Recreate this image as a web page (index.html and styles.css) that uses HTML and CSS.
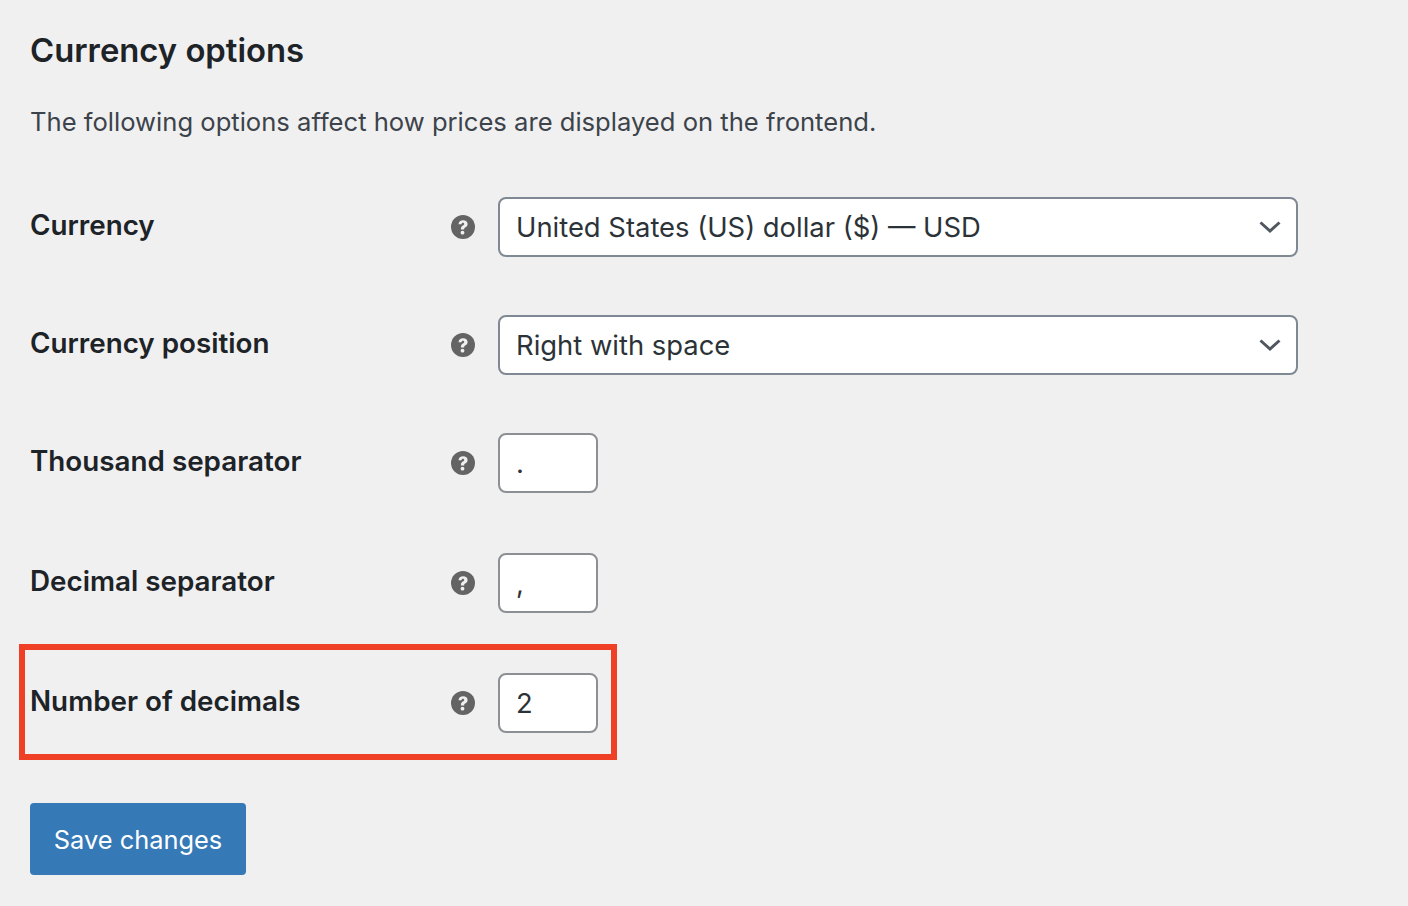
FILE: index.html
```html
<!DOCTYPE html>
<html>
<head>
    <meta charset="UTF-8">
    <meta name="viewport" content="width=device-width, initial-scale=1.0">
    <title>Currency options</title>
    <link rel="stylesheet" href="styles.css">
</head>
<body>
    <div id="container">
        <h2>Currency options</h2>
        <p class="intro">The following options affect how prices are displayed on the frontend.</p>

        <div class="row row-first">
            <label class="row-label">Currency</label>
            <svg class="help" viewBox="0 0 24 24"><circle cx="12" cy="12" r="12" fill="#646464"/><path d="M7.500 9.300C7.700 6.700 9.500 5.200 12.100 5.200c2.700 0 4.500 1.500 4.500 3.700 0 1.600-.8 2.500-2.100 3.300-1 .6-1.300 1-1.300 1.900v.5h-3.300v-.7c0-1.700.5-2.500 1.900-3.400 1-.6 1.400-1 1.400-1.600 0-.7-.5-1.100-1.300-1.100-.8 0-1.300.5-1.400 1.500z" fill="#f0f0f1"/><circle cx="11.500" cy="17.700" r="1.900" fill="#f0f0f1"/></svg>
            <div class="select-wrap">
                <select><option>United States (US) dollar ($) — USD</option></select>
                <svg class="chevron" viewBox="0 0 24 14"><path d="M2.500 2.500 12 11 21.500 2.500" fill="none" stroke="#50575e" stroke-width="3"/></svg>
            </div>
        </div>

        <div class="row">
            <label class="row-label">Currency position</label>
            <svg class="help" viewBox="0 0 24 24"><circle cx="12" cy="12" r="12" fill="#646464"/><path d="M7.500 9.300C7.700 6.700 9.500 5.200 12.100 5.200c2.700 0 4.500 1.500 4.500 3.700 0 1.600-.8 2.500-2.100 3.300-1 .6-1.300 1-1.300 1.900v.5h-3.300v-.7c0-1.700.5-2.500 1.900-3.400 1-.6 1.400-1 1.400-1.600 0-.7-.5-1.100-1.300-1.100-.8 0-1.300.5-1.400 1.500z" fill="#f0f0f1"/><circle cx="11.500" cy="17.700" r="1.900" fill="#f0f0f1"/></svg>
            <div class="select-wrap">
                <select><option>Right with space</option></select>
                <svg class="chevron" viewBox="0 0 24 14"><path d="M2.500 2.500 12 11 21.500 2.500" fill="none" stroke="#50575e" stroke-width="3"/></svg>
            </div>
        </div>

        <div class="row">
            <label class="row-label">Thousand separator</label>
            <svg class="help" viewBox="0 0 24 24"><circle cx="12" cy="12" r="12" fill="#646464"/><path d="M7.500 9.300C7.700 6.700 9.500 5.200 12.100 5.200c2.700 0 4.500 1.500 4.500 3.700 0 1.600-.8 2.500-2.100 3.300-1 .6-1.300 1-1.300 1.900v.5h-3.300v-.7c0-1.700.5-2.500 1.900-3.400 1-.6 1.400-1 1.400-1.600 0-.7-.5-1.100-1.300-1.100-.8 0-1.300.5-1.400 1.500z" fill="#f0f0f1"/><circle cx="11.500" cy="17.700" r="1.900" fill="#f0f0f1"/></svg>
            <input type="text" class="small-input" value=".">
        </div>

        <div class="row row-wide">
            <label class="row-label">Decimal separator</label>
            <svg class="help" viewBox="0 0 24 24"><circle cx="12" cy="12" r="12" fill="#646464"/><path d="M7.500 9.300C7.700 6.700 9.500 5.200 12.100 5.200c2.700 0 4.500 1.500 4.500 3.700 0 1.600-.8 2.500-2.100 3.300-1 .6-1.300 1-1.300 1.900v.5h-3.300v-.7c0-1.700.5-2.500 1.900-3.400 1-.6 1.400-1 1.400-1.600 0-.7-.5-1.100-1.300-1.100-.8 0-1.300.5-1.400 1.500z" fill="#f0f0f1"/><circle cx="11.500" cy="17.700" r="1.900" fill="#f0f0f1"/></svg>
            <input type="text" class="small-input" value=",">
        </div>

        <div class="row row-wide row-marked">
            <label class="row-label">Number of decimals</label>
            <svg class="help" viewBox="0 0 24 24"><circle cx="12" cy="12" r="12" fill="#646464"/><path d="M7.500 9.300C7.700 6.700 9.500 5.200 12.100 5.200c2.700 0 4.500 1.500 4.500 3.700 0 1.600-.8 2.500-2.100 3.300-1 .6-1.300 1-1.300 1.900v.5h-3.300v-.7c0-1.700.5-2.500 1.900-3.400 1-.6 1.400-1 1.400-1.600 0-.7-.5-1.100-1.300-1.100-.8 0-1.300.5-1.400 1.500z" fill="#f0f0f1"/><circle cx="11.500" cy="17.700" r="1.900" fill="#f0f0f1"/></svg>
            <input type="text" class="small-input" value="2">
            <div class="highlight"></div>
        </div>

        <button class="save-button">Save changes</button>
    </div>
</body>
</html>
```

FILE: styles.css
```css
html, body {
    height: 100%;
}

body {
    font-family: Inter, "Liberation Sans", sans-serif;
    background-color: #f0f0f1;
    color: #1d2327;
    margin: 0;
    overflow: hidden;
}

#container {
    padding: 30px 30px 0 30px;
}

h2 {
    font-size: 32.8px;
    line-height: 40px;
    font-weight: 600;
    margin: 0;
}

.intro {
    font-size: 25.6px;
    line-height: 36px;
    color: #3c434a;
    margin: 34px 0 0 0;
}

.row {
    display: flex;
    align-items: center;
    height: 60px;
    margin-top: 58px;
    position: relative;
}

.row-first {
    margin-top: 57px;
}

.row-wide {
    margin-top: 60px;
}

.row-label {
    width: 421px;
    font-size: 27.8px;
    line-height: 34px;
    font-weight: 600;
    margin-bottom: 4px;
}

.help {
    width: 24px;
    height: 24px;
    margin-right: 23px;
}

.select-wrap {
    position: relative;
    width: 800px;
    height: 60px;
}

select {
    appearance: none;
    width: 100%;
    height: 60px;
    box-sizing: border-box;
    border: 2px solid #7e8993;
    border-radius: 8px;
    background-color: #fff;
    color: #2c3338;
    font-family: inherit;
    font-size: 27.4px;
    padding: 0 48px 0 16px;
    outline: none;
}

.chevron {
    position: absolute;
    right: 16px;
    top: 23px;
    width: 24px;
    height: 14px;
}

.small-input {
    width: 100px;
    height: 60px;
    box-sizing: border-box;
    border: 2px solid #8c8f94;
    border-radius: 8px;
    background-color: #fff;
    color: #2c3338;
    font-family: inherit;
    font-size: 27.4px;
    padding: 0 16px;
    outline: none;
}

/* red box drawn over the last row */
.highlight {
    position: absolute;
    left: -11px;
    top: -29px;
    width: 598px;
    height: 116px;
    box-sizing: border-box;
    border: 6px solid #ef3f24;
    pointer-events: none;
}

.save-button {
    display: block;
    width: 216px;
    height: 72px;
    margin-top: 70px;
    background-color: #3579b6;
    color: #fff;
    border: none;
    border-radius: 4px;
    font-family: inherit;
    font-size: 25.4px;
    cursor: pointer;
}
```
